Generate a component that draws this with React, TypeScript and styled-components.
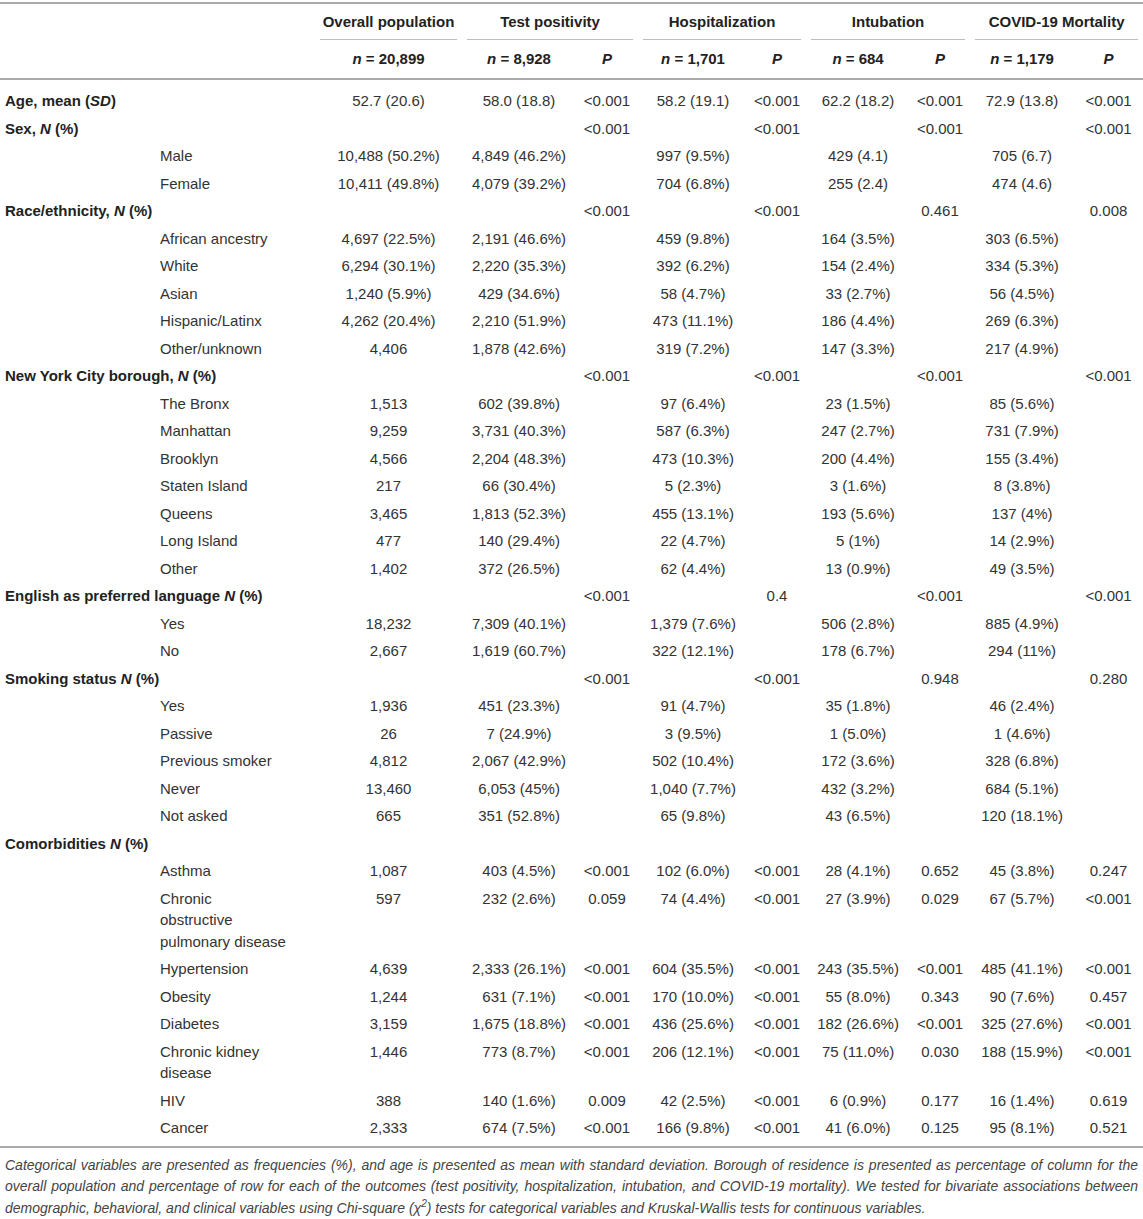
import React from "react";
import styled, { createGlobalStyle } from "styled-components";

const Global = createGlobalStyle`
  html, body { margin: 0; padding: 0; background: #fff; }
  body { font-family: "Liberation Sans", Arial, Helvetica, sans-serif; color: #333; }
`;

const Page = styled.div`
  padding-top: 2px;
  width: 1143px;
`;

const Table = styled.table`
  width: 1143px;
  table-layout: fixed;
  border-collapse: collapse;
  font-size: 15px;
  border-top: 2px solid #a9a9a9;
  border-bottom: 2px solid #a9a9a9;
`;

const Head = styled.thead`
  border-bottom: 2px solid #a9a9a9;
`;

const GroupTh = styled.th`
  padding: 0 5px;
  font-weight: bold;
  color: #222;
  text-align: center;
  vertical-align: bottom;
`;

const GroupLabel = styled.div<{ $line?: boolean }>`
  padding: 9px 0 8px;
  line-height: 18px;
  border-bottom: 1px solid ${(p) => (p.$line ? "#bdbdbd" : "transparent")};
`;

const SubTh = styled.th`
  padding: 10px 5px;
  line-height: 18px;
  font-weight: bold;
  color: #222;
  text-align: center;
`;

const Cell = styled.td<{ $align?: "left" | "center"; $first?: boolean; $last?: boolean; $bold?: boolean }>`
  padding: ${(p) => (p.$first ? "10px" : "3px")} 5px ${(p) => (p.$last ? "7px" : "3px")};
  line-height: 21.5px;
  vertical-align: top;
  text-align: ${(p) => p.$align ?? "center"};
  font-weight: ${(p) => (p.$bold ? "bold" : "normal")};
  color: ${(p) => (p.$bold ? "#222" : "#333")};
`;

const Note = styled.p`
  margin: 7px 0 0;
  padding: 0 5px;
  font-size: 14px;
  line-height: 21.5px;
  font-style: italic;
  color: #444;
  text-align: justify;

  sup {
    font-size: 0.72em;
    line-height: 0;
  }
`;

const widths = [155, 160, 147, 114, 62, 110, 58, 104, 60, 104, 69];

type Row =
  | { kind: "cat"; label: React.ReactNode; vals: string[] }
  | { kind: "sub"; label: React.ReactNode; vals: string[] };

const E = "";
const P = "<0.001";

const rows: Row[] = [
  { kind: "cat", label: <>Age, mean (<i>SD</i>)</>, vals: ["52.7 (20.6)", "58.0 (18.8)", P, "58.2 (19.1)", P, "62.2 (18.2)", P, "72.9 (13.8)", P] },
  { kind: "cat", label: <>Sex, <i>N</i> (%)</>, vals: [E, E, P, E, P, E, P, E, P] },
  { kind: "sub", label: "Male", vals: ["10,488 (50.2%)", "4,849 (46.2%)", E, "997 (9.5%)", E, "429 (4.1)", E, "705 (6.7)", E] },
  { kind: "sub", label: "Female", vals: ["10,411 (49.8%)", "4,079 (39.2%)", E, "704 (6.8%)", E, "255 (2.4)", E, "474 (4.6)", E] },
  { kind: "cat", label: <>Race/ethnicity, <i>N</i> (%)</>, vals: [E, E, P, E, P, E, "0.461", E, "0.008"] },
  { kind: "sub", label: "African ancestry", vals: ["4,697 (22.5%)", "2,191 (46.6%)", E, "459 (9.8%)", E, "164 (3.5%)", E, "303 (6.5%)", E] },
  { kind: "sub", label: "White", vals: ["6,294 (30.1%)", "2,220 (35.3%)", E, "392 (6.2%)", E, "154 (2.4%)", E, "334 (5.3%)", E] },
  { kind: "sub", label: "Asian", vals: ["1,240 (5.9%)", "429 (34.6%)", E, "58 (4.7%)", E, "33 (2.7%)", E, "56 (4.5%)", E] },
  { kind: "sub", label: "Hispanic/Latinx", vals: ["4,262 (20.4%)", "2,210 (51.9%)", E, "473 (11.1%)", E, "186 (4.4%)", E, "269 (6.3%)", E] },
  { kind: "sub", label: "Other/unknown", vals: ["4,406", "1,878 (42.6%)", E, "319 (7.2%)", E, "147 (3.3%)", E, "217 (4.9%)", E] },
  { kind: "cat", label: <>New York City borough, <i>N</i> (%)</>, vals: [E, E, P, E, P, E, P, E, P] },
  { kind: "sub", label: "The Bronx", vals: ["1,513", "602 (39.8%)", E, "97 (6.4%)", E, "23 (1.5%)", E, "85 (5.6%)", E] },
  { kind: "sub", label: "Manhattan", vals: ["9,259", "3,731 (40.3%)", E, "587 (6.3%)", E, "247 (2.7%)", E, "731 (7.9%)", E] },
  { kind: "sub", label: "Brooklyn", vals: ["4,566", "2,204 (48.3%)", E, "473 (10.3%)", E, "200 (4.4%)", E, "155 (3.4%)", E] },
  { kind: "sub", label: "Staten Island", vals: ["217", "66 (30.4%)", E, "5 (2.3%)", E, "3 (1.6%)", E, "8 (3.8%)", E] },
  { kind: "sub", label: "Queens", vals: ["3,465", "1,813 (52.3%)", E, "455 (13.1%)", E, "193 (5.6%)", E, "137 (4%)", E] },
  { kind: "sub", label: "Long Island", vals: ["477", "140 (29.4%)", E, "22 (4.7%)", E, "5 (1%)", E, "14 (2.9%)", E] },
  { kind: "sub", label: "Other", vals: ["1,402", "372 (26.5%)", E, "62 (4.4%)", E, "13 (0.9%)", E, "49 (3.5%)", E] },
  { kind: "cat", label: <>English as preferred language <i>N</i> (%)</>, vals: [E, E, P, E, "0.4", E, P, E, P] },
  { kind: "sub", label: "Yes", vals: ["18,232", "7,309 (40.1%)", E, "1,379 (7.6%)", E, "506 (2.8%)", E, "885 (4.9%)", E] },
  { kind: "sub", label: "No", vals: ["2,667", "1,619 (60.7%)", E, "322 (12.1%)", E, "178 (6.7%)", E, "294 (11%)", E] },
  { kind: "cat", label: <>Smoking status <i>N</i> (%)</>, vals: [E, E, P, E, P, E, "0.948", E, "0.280"] },
  { kind: "sub", label: "Yes", vals: ["1,936", "451 (23.3%)", E, "91 (4.7%)", E, "35 (1.8%)", E, "46 (2.4%)", E] },
  { kind: "sub", label: "Passive", vals: ["26", "7 (24.9%)", E, "3 (9.5%)", E, "1 (5.0%)", E, "1 (4.6%)", E] },
  { kind: "sub", label: "Previous smoker", vals: ["4,812", "2,067 (42.9%)", E, "502 (10.4%)", E, "172 (3.6%)", E, "328 (6.8%)", E] },
  { kind: "sub", label: "Never", vals: ["13,460", "6,053 (45%)", E, "1,040 (7.7%)", E, "432 (3.2%)", E, "684 (5.1%)", E] },
  { kind: "sub", label: "Not asked", vals: ["665", "351 (52.8%)", E, "65 (9.8%)", E, "43 (6.5%)", E, "120 (18.1%)", E] },
  { kind: "cat", label: <>Comorbidities <i>N</i> (%)</>, vals: [E, E, E, E, E, E, E, E, E] },
  { kind: "sub", label: "Asthma", vals: ["1,087", "403 (4.5%)", P, "102 (6.0%)", P, "28 (4.1%)", "0.652", "45 (3.8%)", "0.247"] },
  { kind: "sub", label: <>Chronic<br />obstructive<br />pulmonary disease</>, vals: ["597", "232 (2.6%)", "0.059", "74 (4.4%)", P, "27 (3.9%)", "0.029", "67 (5.7%)", P] },
  { kind: "sub", label: "Hypertension", vals: ["4,639", "2,333 (26.1%)", P, "604 (35.5%)", P, "243 (35.5%)", P, "485 (41.1%)", P] },
  { kind: "sub", label: "Obesity", vals: ["1,244", "631 (7.1%)", P, "170 (10.0%)", P, "55 (8.0%)", "0.343", "90 (7.6%)", "0.457"] },
  { kind: "sub", label: "Diabetes", vals: ["3,159", "1,675 (18.8%)", P, "436 (25.6%)", P, "182 (26.6%)", P, "325 (27.6%)", P] },
  { kind: "sub", label: <>Chronic kidney<br />disease</>, vals: ["1,446", "773 (8.7%)", P, "206 (12.1%)", P, "75 (11.0%)", "0.030", "188 (15.9%)", P] },
  { kind: "sub", label: "HIV", vals: ["388", "140 (1.6%)", "0.009", "42 (2.5%)", P, "6 (0.9%)", "0.177", "16 (1.4%)", "0.619"] },
  { kind: "sub", label: "Cancer", vals: ["2,333", "674 (7.5%)", P, "166 (9.8%)", P, "41 (6.0%)", "0.125", "95 (8.1%)", "0.521"] },
];

const groups = [
  { label: "Overall population", span: 1 },
  { label: "Test positivity", span: 2 },
  { label: "Hospitalization", span: 2 },
  { label: "Intubation", span: 2 },
  { label: "COVID-19 Mortality", span: 2 },
];

const counts = ["20,899", "8,928", null, "1,701", null, "684", null, "1,179", null];

export default function App() {
  return (
    <Page>
      <Global />
      <Table>
        <colgroup>
          {widths.map((w, i) => (
            <col key={i} style={{ width: w }} />
          ))}
        </colgroup>
        <Head>
          <tr>
            <GroupTh colSpan={2}>
              <GroupLabel>&nbsp;</GroupLabel>
            </GroupTh>
            {groups.map((g) => (
              <GroupTh key={g.label} colSpan={g.span}>
                <GroupLabel $line>{g.label}</GroupLabel>
              </GroupTh>
            ))}
          </tr>
          <tr>
            <SubTh colSpan={2} />
            {counts.map((c, i) => (
              <SubTh key={i}>
                {c ? (
                  <>
                    <i>n</i> = {c}
                  </>
                ) : (
                  <i>P</i>
                )}
              </SubTh>
            ))}
          </tr>
        </Head>
        <tbody>
          {rows.map((r, ri) => {
            const first = ri === 0;
            const last = ri === rows.length - 1;
            return (
              <tr key={ri}>
                {r.kind === "cat" ? (
                  <Cell colSpan={2} $align="left" $bold $first={first} $last={last}>
                    {r.label}
                  </Cell>
                ) : (
                  <>
                    <Cell $first={first} $last={last} />
                    <Cell $align="left" $first={first} $last={last}>
                      {r.label}
                    </Cell>
                  </>
                )}
                {r.vals.map((v, vi) => (
                  <Cell key={vi} $first={first} $last={last}>
                    {v}
                  </Cell>
                ))}
              </tr>
            );
          })}
        </tbody>
      </Table>
      <Note>
        Categorical variables are presented as frequencies (%), and age is presented as mean with standard
        deviation. Borough of residence is presented as percentage of column for the overall population and
        percentage of row for each of the outcomes (test positivity, hospitalization, intubation, and COVID-19
        mortality). We tested for bivariate associations between demographic, behavioral, and clinical variables
        using Chi-square (χ<sup>2</sup>) tests for categorical variables and Kruskal-Wallis tests for continuous
        variables.
      </Note>
    </Page>
  );
}
